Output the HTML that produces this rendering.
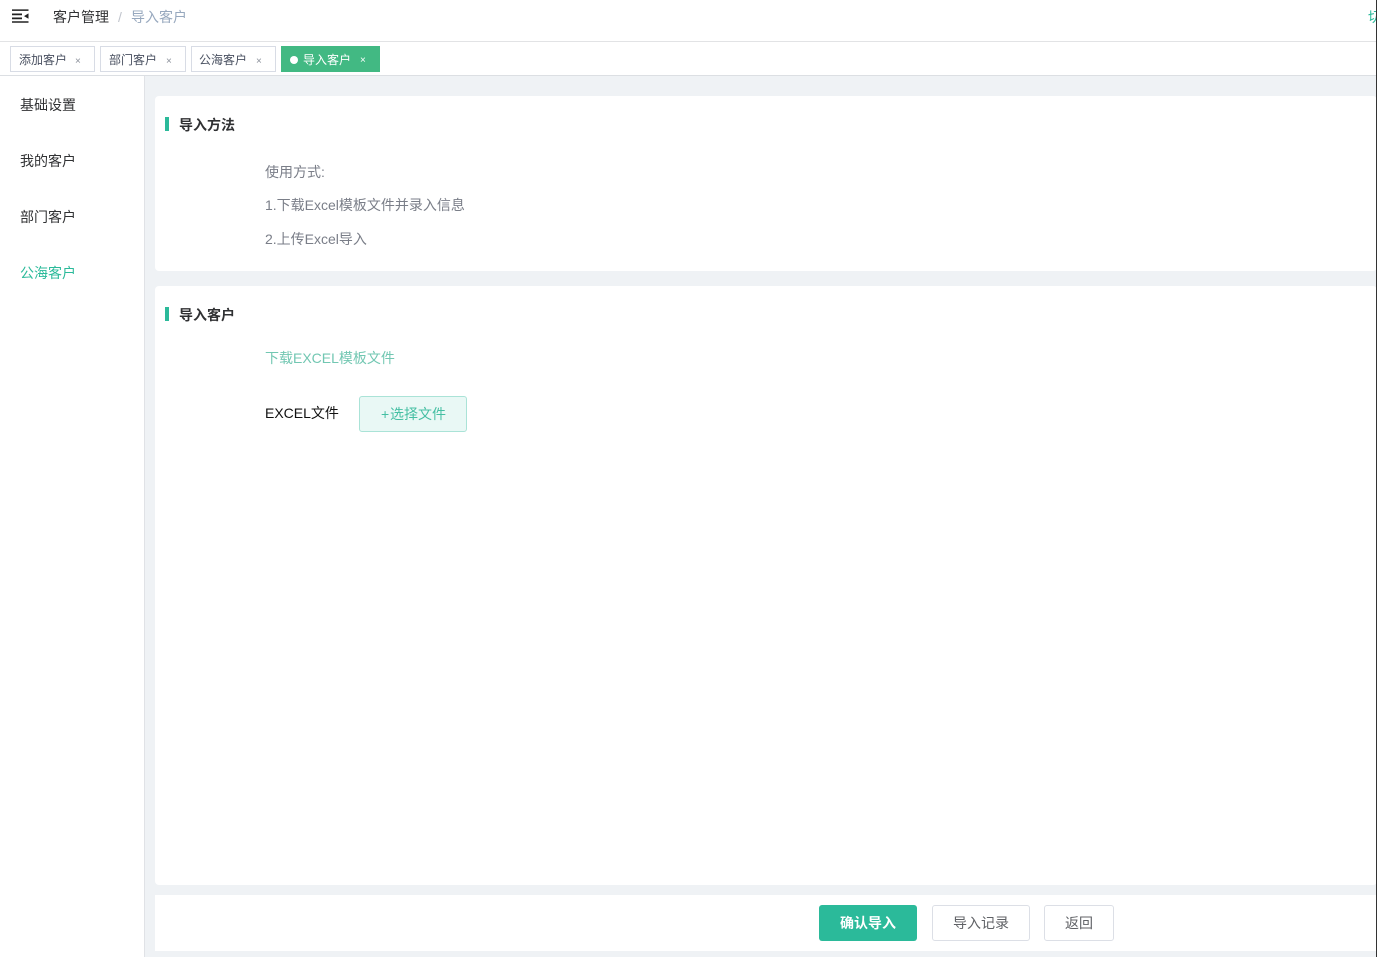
<!DOCTYPE html>
<html lang="zh">
<head>
<meta charset="utf-8">
<style>
html,body{margin:0;padding:0;width:1377px;height:957px;overflow:hidden;background:#fff}
body{font-family:"Liberation Sans","Noto Sans CJK SC",sans-serif;position:relative;font-size:14px;color:#303133}
.a{position:absolute;white-space:nowrap}
.tab{position:absolute;top:46px;height:24px;border:1px solid #d8dce5;background:#fff;font-size:12px;line-height:26px;color:#495060;box-sizing:content-box}
.tab span{position:absolute;left:8px;top:0}
.tab i{position:absolute;font-style:normal;top:2px;font-size:10px;color:#8a8f99}
.card{position:absolute;left:155px;width:1222px;background:#fff;border-radius:4px}
.bar{position:absolute;left:165px;width:4px;height:14px;background:#2bba9a}
.h{font-weight:700;font-size:14px;color:#303133;left:179px;line-height:18px}
.g{color:#7a7e88;left:265px;line-height:20px}
.btn{position:absolute;top:905px;height:36px;box-sizing:border-box;border-radius:3px;text-align:center;line-height:34px;font-size:14px}
</style>
</head>
<body>
<svg class="a" style="left:12px;top:9px" width="17" height="14" viewBox="0 0 17 14"><path d="M0 0.4H16.5V1.9H0zM0 4.5H10V6.3H0zM0 8.5H10V10.3H0zM0 12.3H16.5V13.8H0z" fill="#222"/><path d="M16.5 4.4V9.8L12 7.1z" fill="#222"/></svg>
<div class="a" style="left:53px;top:7px;line-height:20px;font-size:14px;color:#303133">客户管理</div>
<div class="a" style="left:118px;top:7px;line-height:20px;font-size:14px;color:#c0c4cc">/</div>
<div class="a" style="left:131px;top:7px;line-height:20px;font-size:14px;color:#97a8be">导入客户</div>
<div class="a" style="left:1368px;top:7px;line-height:20px;font-size:14px;color:#2bba9a;width:8px;overflow:hidden">切</div>
<div class="a" style="left:0;top:41px;width:1377px;height:1px;background:#e2e3e5"></div>

<div class="tab" style="left:10px;width:83px"><span>添加客户</span><i style="left:64px">×</i></div>
<div class="tab" style="left:100px;width:84px"><span>部门客户</span><i style="left:65px">×</i></div>
<div class="tab" style="left:191px;width:83px"><span style="left:7px">公海客户</span><i style="left:64px">×</i></div>
<div class="a" style="left:281px;top:46px;width:99px;height:26px;background:#42b983;color:#fff;font-size:12px;line-height:28px">
  <div class="a" style="left:9px;top:10px;width:8px;height:8px;border-radius:50%;background:#fff"></div>
  <div class="a" style="left:22px;top:0">导入客户</div>
  <div class="a" style="left:79px;top:1px;font-size:10px">×</div>
</div>

<div class="a" style="left:0;top:75px;width:1377px;height:1px;background:#dcdfe3"></div>
<div class="a" style="left:144px;top:76px;width:1233px;height:881px;background:#eff2f5"></div>
<div class="a" style="left:144px;top:76px;width:1px;height:881px;background:#e0e2e6"></div>

<div class="a" style="left:20px;top:95px;line-height:20px;font-size:14px;color:#303133">基础设置</div>
<div class="a" style="left:20px;top:151px;line-height:20px;font-size:14px;color:#303133">我的客户</div>
<div class="a" style="left:20px;top:207px;line-height:20px;font-size:14px;color:#303133">部门客户</div>
<div class="a" style="left:20px;top:263px;line-height:20px;font-size:14px;color:#2bba9a">公海客户</div>

<div class="card" style="top:96px;height:175px"></div>
<div class="card" style="top:286px;height:599px"></div>
<div class="card" style="top:895px;height:56px;border-radius:0"></div>

<div class="bar" style="top:117px"></div>
<div class="a h" style="top:116px">导入方法</div>
<div class="a g" style="top:162px">使用方式:</div>
<div class="a g" style="top:195px">1.下载Excel模板文件并录入信息</div>
<div class="a g" style="top:229px">2.上传Excel导入</div>

<div class="bar" style="top:307px"></div>
<div class="a h" style="top:306px">导入客户</div>
<div class="a" style="left:265px;top:348px;line-height:20px;color:#72c7b2">下载EXCEL模板文件</div>
<div class="a" style="left:265px;top:403px;line-height:20px;color:#111">EXCEL文件</div>
<div class="a" style="left:359px;top:396px;width:108px;height:36px;box-sizing:border-box;background:#e9f8f5;border:1px solid #aae3d7;border-radius:3px;line-height:34px;color:#45bfa3"><span class="a" style="left:21px;top:0">+</span><span class="a" style="left:30px;top:0">选择文件</span></div>

<div class="btn" style="left:819px;width:98px;background:#2bba9a;color:#fff;line-height:36px;font-weight:700;font-size:14px">确认导入</div>
<div class="btn" style="left:932px;width:98px;background:#fff;border:1px solid #dcdfe6;color:#606266">导入记录</div>
<div class="btn" style="left:1044px;width:70px;background:#fff;border:1px solid #dcdfe6;color:#606266">返回</div>

<div class="a" style="left:1376px;top:0;width:1px;height:957px;background:#333"></div>
</body>
</html>
